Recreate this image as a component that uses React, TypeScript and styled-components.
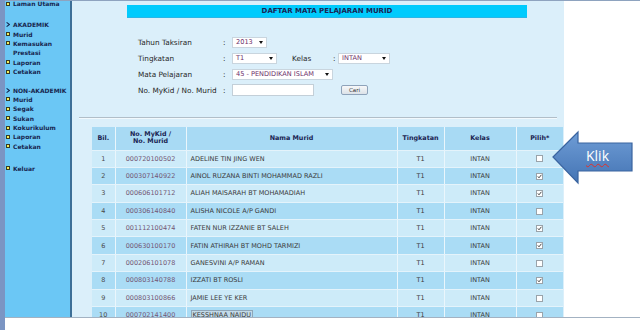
import React from "react";
import styled, { createGlobalStyle } from "styled-components";

const Global = createGlobalStyle`
  html, body { margin: 0; padding: 0; background: #fff; }
  body { width: 640px; height: 330px; overflow: hidden; font-family: "DejaVu Sans", Verdana, sans-serif; }
  * { box-sizing: border-box; }
`;

const Page = styled.div`
  position: relative;
  display: flex;
  width: 640px;
  height: 330px;
  background: #fff;
`;

const LeftStrip = styled.div`
  width: 5px;
  height: 100%;
  background: #7b95c3;
`;

const Frame = styled.div`
  flex: 1;
  display: flex;
  flex-direction: column;
`;

const Viewport = styled.div`
  display: flex;
  height: 318px;
  border-top: 1px solid #8ea3bf;
  border-bottom: 1px solid #a3b2c2;
  overflow: hidden;
`;

const Sidebar = styled.div`
  width: 67px;
  flex: none;
  background: #6bc7f5;
  border-right: 2px solid #3d6f97;
  overflow: hidden;
`;

const MenuList = styled.div`
  margin-top: -2px;
  padding-left: 1px;
`;

const MenuItem = styled.div<{ $indent?: boolean }>`
  display: flex;
  align-items: center;
  height: 9.4px;
  font-size: 6px;
  font-weight: bold;
  color: #17264f;
  white-space: nowrap;
  padding-left: ${(p) => (p.$indent ? "7px" : "0")};
`;

const Bullet = styled.span`
  width: 4px;
  height: 4px;
  margin-right: 3px;
  background: #f4f05a;
  border: 1px solid #3a3a20;
  flex: none;
`;

const Chevron = styled.svg`
  width: 4px;
  height: 5px;
  margin-right: 3px;
  flex: none;
`;

const Spacer = styled.div<{ $h: number }>`
  height: ${(p) => p.$h}px;
`;

const Content = styled.div`
  width: 492px;
  flex: none;
  background: #dbeffa;
  padding-top: 4px;
  overflow: hidden;
`;

const TitleBar = styled.div`
  margin-left: 55px;
  width: 400px;
  height: 13px;
  background: #00cbfd;
  border-bottom: 1px solid #2ab6e6;
  font-size: 7px;
  font-weight: bold;
  line-height: 13px;
  text-align: center;
  color: #1a2452;
`;

const Form = styled.div`
  margin-top: 16px;
  padding-left: 66px;
`;

const FormRow = styled.div`
  display: flex;
  align-items: center;
  height: 16px;
`;

const Label = styled.span<{ $w: number; $ml?: number }>`
  width: ${(p) => p.$w}px;
  margin-left: ${(p) => p.$ml ?? 0}px;
  font-size: 7.3px;
  color: #262626;
  white-space: nowrap;
`;

const Colon = styled.span<{ $w: number }>`
  width: ${(p) => p.$w}px;
  font-size: 7.3px;
  color: #262626;
`;

const SelectBox = styled.div<{ $w: number }>`
  width: ${(p) => p.$w}px;
  height: 11px;
  background: #fff;
  border: 1px solid #c9d5de;
  display: flex;
  align-items: center;
  justify-content: space-between;
  padding: 0 3px 0 3px;
  font-size: 6.6px;
  color: #6d2f6a;
  white-space: nowrap;
`;

const Caret = styled.span`
  width: 0;
  height: 0;
  border-left: 2px solid transparent;
  border-right: 2px solid transparent;
  border-top: 3px solid #111;
`;

const TextInput = styled.div`
  width: 82px;
  height: 12px;
  background: #fff;
  border: 1px solid #c3cfd8;
`;

const Button = styled.div`
  margin-left: 27px;
  width: 27px;
  height: 10px;
  border: 1px solid #8ea3ba;
  border-radius: 2px;
  background: linear-gradient(#f7f8f9, #dce2e8);
  font-size: 5.5px;
  color: #333;
  text-align: center;
  line-height: 8px;
`;

const Rule = styled.div`
  margin: 19px 0 0 7px;
  width: 478px;
  border-top: 1px solid #b1bec8;
  border-bottom: 1px solid #f2f9fd;
`;

const Table = styled.table`
  margin: 8px 0 0 20px;
  width: 471px;
  border-collapse: collapse;
  table-layout: fixed;
`;

const Th = styled.th<{ $w: number }>`
  width: ${(p) => p.$w}px;
  height: 23px;
  padding: 0;
  background: #a8daf4;
  border-right: 1px solid #eaf6fc;
  border-bottom: 1px solid #e4f3fb;
  font-size: 6.4px;
  font-weight: bold;
  color: #1a2452;
  line-height: 7.5px;
  text-align: center;
  &:last-child { border-right: none; }
`;

const Tr = styled.tr<{ $alt: boolean }>`
  height: 17.4px;
  background: ${(p) => (p.$alt ? "#aadcf5" : "#cdebf9")};
`;

const Td = styled.td<{ $align?: string; $color?: string }>`
  padding: 0 0 0 ${(p) => (p.$align === "left" ? "4px" : "0")};
  text-align: ${(p) => p.$align ?? "center"};
  border-right: 1px solid #eaf6fc;
  border-bottom: 1px solid #e4f3fb;
  font-size: 6.5px;
  color: ${(p) => p.$color ?? "#3a3a3a"};
  white-space: nowrap;
  overflow: hidden;
  &:last-child { border-right: none; }
`;

const Highlight = styled.span`
  border: 1px solid #8fa6b8;
  background: #c3dbe9;
  padding: 0 1px;
`;

const Check = styled.span<{ $on: boolean }>`
  display: inline-block;
  width: 7px;
  height: 7px;
  background: #fff;
  border: 1px solid #9aa3aa;
  position: relative;
  vertical-align: middle;
  svg { position: absolute; left: 0; top: 0; }
`;

const Aside = styled.div`
  flex: 1;
  background: #fff;
`;

const Callout = styled.div`
  position: absolute;
  left: 550px;
  top: 129px;
  width: 86px;
  height: 57px;
`;

const CalloutText = styled.span`
  position: absolute;
  left: 36px;
  top: 18px;
  font-family: "Open Sans", "Liberation Sans", sans-serif;
  font-size: 14px;
  line-height: 18px;
  color: #fff;
  text-decoration: underline wavy #e0302a;
  text-decoration-thickness: 1px;
  text-underline-offset: 2px;
`;

const rows: [string, string, boolean][] = [
  ["000720100502", "ADELINE TIN JING WEN", false],
  ["000307140922", "AINOL RUZANA BINTI MOHAMMAD RAZLI", true],
  ["000606101712", "ALIAH MAISARAH BT MOHAMADIAH", true],
  ["000306140840", "ALISHA NICOLE A/P GANDI", false],
  ["001112100474", "FATEN NUR IZZANIE BT SALEH", true],
  ["000630100170", "FATIN ATHIRAH BT MOHD TARMIZI", true],
  ["000206101078", "GANESVINI A/P RAMAN", false],
  ["000803140788", "IZZATI BT ROSLI", true],
  ["000803100866", "JAMIE LEE YE KER", false],
  ["000702141400", "KESSHNAA NAIDU", false],
];

const ChevronIcon = () => (
  <Chevron viewBox="0 0 4 5">
    <path d="M0.6 0.4 L3.4 2.5 L0.6 4.6" fill="none" stroke="#17264f" strokeWidth="1.1" />
  </Chevron>
);

const Item = ({ label, bullet = true, indent = false }: { label: string; bullet?: boolean; indent?: boolean }) => (
  <MenuItem $indent={indent}>
    {bullet && !indent && <Bullet />}
    {label}
  </MenuItem>
);

const Section = ({ label }: { label: string }) => (
  <MenuItem>
    <ChevronIcon />
    {label}
  </MenuItem>
);

export default function App() {
  return (
    <>
      <Global />
      <Page>
        <LeftStrip />
        <Frame>
          <Viewport>
            <Sidebar>
              <MenuList>
                <Item label="Laman Utama" />
                <Spacer $h={11.6} />
                <Section label="AKADEMIK" />
                <Item label="Murid" />
                <Item label="Kemasukan" />
                <Item label="Prestasi" indent />
                <Item label="Laporan" />
                <Item label="Cetakan" />
                <Spacer $h={9} />
                <Section label="NON-AKADEMIK" />
                <Item label="Murid" />
                <Item label="Segak" />
                <Item label="Sukan" />
                <Item label="Kokurikulum" />
                <Item label="Laporan" />
                <Item label="Cetakan" />
                <Spacer $h={12.6} />
                <Item label="Keluar" />
              </MenuList>
            </Sidebar>
            <Content>
              <TitleBar>DAFTAR MATA PELAJARAN MURID</TitleBar>
              <Form>
                <FormRow>
                  <Label $w={85}>Tahun Taksiran</Label>
                  <Colon $w={9}>:</Colon>
                  <SelectBox $w={35}>
                    2013 <Caret />
                  </SelectBox>
                </FormRow>
                <FormRow>
                  <Label $w={85}>Tingkatan</Label>
                  <Colon $w={9}>:</Colon>
                  <SelectBox $w={45}>
                    T1 <Caret />
                  </SelectBox>
                  <Label $w={41} $ml={15}>Kelas</Label>
                  <Colon $w={5}>:</Colon>
                  <SelectBox $w={52}>
                    INTAN <Caret />
                  </SelectBox>
                </FormRow>
                <FormRow>
                  <Label $w={85}>Mata Pelajaran</Label>
                  <Colon $w={9}>:</Colon>
                  <SelectBox $w={101}>
                    45 - PENDIDIKAN ISLAM <Caret />
                  </SelectBox>
                </FormRow>
                <FormRow>
                  <Label $w={85}>No. MyKid / No. Murid</Label>
                  <Colon $w={9}>:</Colon>
                  <TextInput />
                  <Button>Cari</Button>
                </FormRow>
              </Form>
              <Rule />
              <Table>
                <thead>
                  <tr>
                    <Th $w={23}>Bil.</Th>
                    <Th $w={71}>
                      No. MyKid /<br />
                      No. Murid
                    </Th>
                    <Th $w={211}>Nama Murid</Th>
                    <Th $w={47}>Tingkatan</Th>
                    <Th $w={72}>Kelas</Th>
                    <Th $w={47}>Pilih*</Th>
                  </tr>
                </thead>
                <tbody>
                  {rows.map(([id, name, on], i) => (
                    <Tr key={id} $alt={i % 2 === 1}>
                      <Td $color="#4a4a4a">{i + 1}</Td>
                      <Td $color="#735775">{id}</Td>
                      <Td $align="left">{i === 9 ? <Highlight>{name}</Highlight> : name}</Td>
                      <Td>T1</Td>
                      <Td>INTAN</Td>
                      <Td>
                        <Check $on={on}>
                          {on && (
                            <svg width="5" height="5" viewBox="0 0 5 5">
                              <path d="M0.8 2.4 L2 3.8 L4.4 0.8" fill="none" stroke="#333" strokeWidth="0.9" />
                            </svg>
                          )}
                        </Check>
                      </Td>
                    </Tr>
                  ))}
                </tbody>
              </Table>
            </Content>
            <Aside />
          </Viewport>
        </Frame>
        <Callout>
          <svg width="86" height="57" viewBox="0 0 86 57">
            <defs>
              <linearGradient id="ag" x1="0" y1="0" x2="0" y2="1">
                <stop offset="0" stopColor="#6f9dd6" />
                <stop offset="1" stopColor="#4474b4" />
              </linearGradient>
            </defs>
            <path
              d="M3 28 L28 3 L28 14 L82 14 L82 42 L28 42 L28 54 Z"
              fill="url(#ag)"
              stroke="#3a64a0"
              strokeWidth="1.2"
              strokeLinejoin="miter"
            />
          </svg>
          <CalloutText>Klik</CalloutText>
        </Callout>
      </Page>
    </>
  );
}
